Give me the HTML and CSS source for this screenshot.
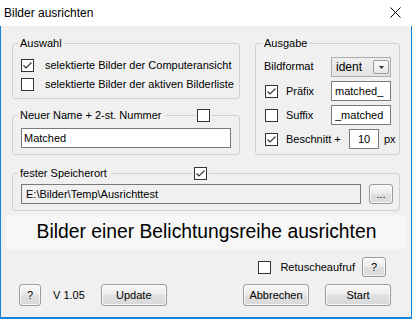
FILE: index.html
```html
<!DOCTYPE html>
<html lang="de">
<head>
    <meta charset="UTF-8">
    <meta name="viewport" content="width=device-width, initial-scale=1.0">
    <title>Bilder ausrichten</title>
    <link rel="stylesheet" href="styles.css">
</head>
<body>

    <div class="window">
        <!-- Title bar -->
        <div class="titlebar">
            <span class="title">Bilder ausrichten</span>
            <svg class="close" width="11" height="11" viewBox="0 0 11 11">
                <path d="M0.5 0.5 L10.5 10.5 M10.5 0.5 L0.5 10.5" stroke="#000" stroke-width="1" fill="none"/>
            </svg>
        </div>

        <div class="client">
            <div class="top">
                <div class="left-col">
                    <fieldset class="group auswahl">
                        <legend>Auswahl</legend>
                        <div class="check-row"><span class="cb checked"><svg width="11" height="11" viewBox="0 0 11 11"><polyline points="1.5,5.5 4,8 9.5,2.5" stroke="#333" stroke-width="1.1" fill="none"/></svg></span>selektierte Bilder der Computeransicht</div>
                        <div class="check-row"><span class="cb"></span>selektierte Bilder der aktiven Bilderliste</div>
                    </fieldset>

                    <fieldset class="group name">
                        <legend class="legend-check"><span>Neuer Name + 2-st. Nummer</span><span class="rule"></span><span class="cb"></span></legend>
                        <input type="text" class="textbox wide" value="Matched" readonly>
                    </fieldset>
                </div>

                <fieldset class="group ausgabe">
                    <legend>Ausgabe</legend>
                    <div class="out-row">
                        <span class="out-label span2">Bildformat</span>
                        <div class="combo">
                            <span>ident</span>
                            <span class="combo-btn"><svg width="5" height="3" viewBox="0 0 5 3"><path d="M0 0 H5 L2.5 3 Z" fill="#333"/></svg></span>
                        </div>
                    </div>
                    <div class="out-row">
                        <span class="cb checked"><svg width="11" height="11" viewBox="0 0 11 11"><polyline points="1.5,5.5 4,8 9.5,2.5" stroke="#333" stroke-width="1.1" fill="none"/></svg></span>
                        <span class="out-label">Präfix</span>
                        <input type="text" class="textbox" value="matched_" readonly>
                    </div>
                    <div class="out-row">
                        <span class="cb"></span>
                        <span class="out-label">Suffix</span>
                        <input type="text" class="textbox" value="_matched" readonly>
                    </div>
                    <div class="out-row">
                        <span class="cb checked"><svg width="11" height="11" viewBox="0 0 11 11"><polyline points="1.5,5.5 4,8 9.5,2.5" stroke="#333" stroke-width="1.1" fill="none"/></svg></span>
                        <span class="out-label">Beschnitt +</span>
                        <div class="px-cell">
                            <input type="text" class="textbox small" value="10" readonly>
                            <span>px</span>
                        </div>
                    </div>
                </fieldset>
            </div>

            <fieldset class="group ort">
                <legend class="legend-check"><span>fester Speicherort</span><span class="rule rule-ort"></span><span class="cb checked"><svg width="11" height="11" viewBox="0 0 11 11"><polyline points="1.5,5.5 4,8 9.5,2.5" stroke="#333" stroke-width="1.1" fill="none"/></svg></span></legend>
                <div class="path-row">
                    <input type="text" class="textbox path" value="E:\Bilder\Temp\Ausrichttest" readonly>
                    <button class="btn dots">...</button>
                </div>
            </fieldset>

            <div class="banner">Bilder einer Belichtungsreihe ausrichten</div>

            <div class="retusche-row">
                <span class="cb"></span>
                <span class="retusche-label">Retuscheaufruf</span>
                <button class="btn help-small">?</button>
            </div>

            <div class="bottom-row">
                <button class="btn help">?</button>
                <span class="version">V 1.05</span>
                <button class="btn std">Update</button>
                <button class="btn std push-right">Abbrechen</button>
                <button class="btn std">Start</button>
            </div>
        </div>
    </div>

</body>
</html>
```

FILE: styles.css
```css
body {
    margin: 0;
    font-family: "Liberation Sans", Arial, sans-serif;
    font-size: 11px;
    color: #000;
    background-color: #f0f0f0;
    white-space: nowrap;
}

.window {
    width: 412px;
    height: 319px;
    box-sizing: border-box;
    display: flex;
    flex-direction: column;
}

.titlebar {
    height: 26px;
    flex: none;
    background-color: #fff;
    display: flex;
    align-items: center;
    padding: 0 11px 0 4px;
}

.title {
    font-size: 12px;
    line-height: 26px;
    flex: 1;
}

.close {
    margin-top: -2px;
}

.client {
    flex: 1;
    background-color: #f0f0f0;
    border: 1px solid #1883d7;
    border-top: none;
    border-bottom-width: 2px;
    padding: 11px 5px 0 6px;
}

/* group boxes */
.group {
    margin: 0;
    border: 1px solid #d0d0d0;
    border-radius: 3px;
    min-width: 0;
}

.group legend {
    margin-left: -3px;
    padding: 0 2px;
    line-height: 13px;
    height: 13px;
}

.legend-check {
    display: flex;
    align-items: center;
}

.legend-check .rule {
    height: 1px;
    background-color: #d0d0d0;
    margin: 0 2px 0 4px;
    width: 29px;
}

.legend-check .rule-ort {
    width: 81px;
}

.top {
    display: flex;
    margin: 0 6px 0 5px;
    gap: 15px;
}

.left-col {
    width: 228px;
    display: flex;
    flex-direction: column;
}

.auswahl {
    padding: 6px 6px 4px 8px;
}

.check-row {
    height: 19px;
    display: flex;
    align-items: center;
    line-height: 13px;
}

.check-row .cb {
    margin-right: 11px;
}

.name {
    margin-top: 10px;
    padding: 6px 8px 6px 8px;
}

.ausgabe {
    width: 145px;
    box-sizing: border-box;
    padding: 7px 8px 4px 9px;
    display: grid;
    grid-template-columns: 13px minmax(0, 1fr) 60px;
    grid-auto-rows: 20px;
    column-gap: 8px;
    row-gap: 4px;
}

.out-row {
    display: contents;
}

.out-label {
    align-self: center;
    line-height: 13px;
}

.out-row:first-of-type .out-label,
.out-row:first-of-type .combo {
    margin-bottom: 1px;
}

.span2 {
    grid-column: 1 / 3;
    margin-left: -1px;
}

.out-row .cb {
    align-self: center;
}

/* checkbox */
.cb {
    width: 13px;
    height: 13px;
    box-sizing: border-box;
    border: 1px solid #333;
    background-color: #fff;
    display: inline-flex;
    flex: none;
}

.cb svg {
    display: block;
}

/* text boxes */
.textbox {
    font: inherit;
    color: #000;
    height: 20px;
    box-sizing: border-box;
    border: 1px solid #7a7a7a;
    background-color: #fff;
    padding: 0 3px;
    margin: 0;
    outline: none;
    width: 60px;
}

.textbox.wide {
    width: 210px;
    display: block;
    padding-left: 2px;
}

.textbox.small {
    width: 30px;
    text-align: center;
    padding: 0;
}

.textbox.path {
    width: 340px;
    background-color: #f0f0f0;
    padding-left: 4px;
}

.px-cell {
    display: flex;
    align-items: center;
    gap: 5px;
    margin-left: 18px;
}

/* combo box */
.combo {
    height: 20px;
    box-sizing: border-box;
    border: 1px solid #acacac;
    background: linear-gradient(#efefef, #e3e3e3);
    display: flex;
    align-items: center;
    padding: 0 1px 0 4px;
    font-size: 12px;
}

.combo span:first-child {
    flex: 1;
}

.combo-btn {
    width: 16px;
    height: 14px;
    box-sizing: border-box;
    border: 1px solid #9c9c9c;
    border-radius: 2px;
    background: linear-gradient(#fafafa, #e6e6e6);
    display: flex;
    align-items: center;
    justify-content: center;
}

.ort {
    margin: 12px 6px 0 5px;
    padding: 4px 6px 6px 8px;
}

.path-row {
    display: flex;
    gap: 8px;
}

/* buttons */
.btn {
    font: inherit;
    color: #000;
    border: 1px solid #9a9a9a;
    border-radius: 3px;
    background: linear-gradient(#f8f8f8, #ededed 45%, #e0e0e0 52%, #d9d9d9);
    box-shadow: inset 0 0 0 1px rgba(255, 255, 255, 0.7);
    padding: 0;
    margin: 0;
    height: 22px;
    box-sizing: border-box;
}

.dots {
    width: 24px;
    height: 20px;
    line-height: 14px;
}

.std {
    width: 66px;
}

.help {
    width: 22px;
}

.help-small {
    width: 24px;
    height: 20px;
}

.banner {
    margin-top: 4px;
    height: 34px;
    line-height: 34px;
    background-color: #f7f7f7;
    text-align: center;
    font-size: 19.3px;
}

.retusche-row {
    margin-top: 8px;
    height: 20px;
    display: flex;
    justify-content: flex-end;
    align-items: center;
    padding-right: 20px;
}

.retusche-label {
    margin: 0 7px 0 9px;
}

.bottom-row {
    margin-top: 7px;
    display: flex;
    align-items: center;
    padding: 0 15px 0 12px;
}

.version {
    margin: 0 16px 0 12px;
}

.push-right {
    margin-left: auto;
    margin-right: 16px;
}
```
